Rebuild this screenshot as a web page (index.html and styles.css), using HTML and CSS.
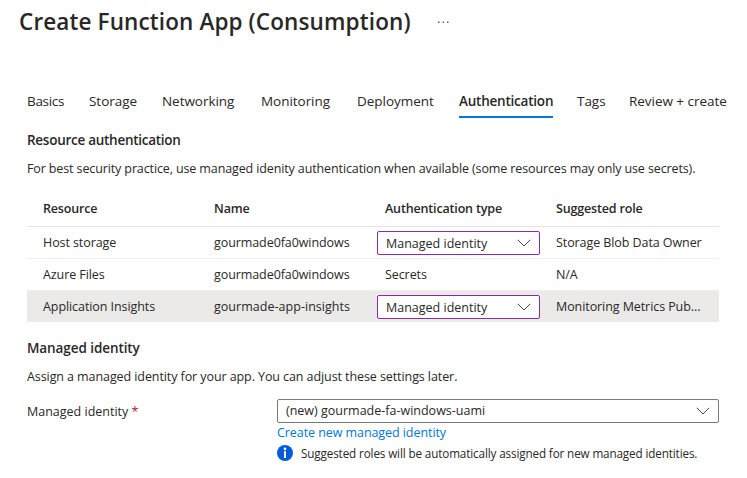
FILE: index.html
```html
<!DOCTYPE html>
<html lang="en">
<head>
<meta charset="utf-8">
<title>Create Function App (Consumption)</title>
<link rel="stylesheet" href="styles.css">
</head>
<body>
<header class="page-header">
  <h1>Create Function App (Consumption)</h1>
  <svg class="more" width="13" height="3" viewBox="0 0 13 3"><path d="M1 .5h1.500v1.500H1zM5.500 .5H7v1.500H5.500zM10 .5h1.500v1.500H10z" fill="#656368"/></svg>
</header>
<nav class="tabs">
  <a>Basics</a><a>Storage</a><a>Networking</a><a>Monitoring</a><a>Deployment</a><a class="active">Authentication</a><a>Tags</a><a>Review + create</a>
</nav>
<main>
  <section class="resources">
    <h2>Resource authentication</h2>
    <p class="intro">For best security practice, use managed idenity authentication when available (some resources may only use secrets).</p>
    <div class="table">
      <div class="row head"><span>Resource</span><span>Name</span><span>Authentication type</span><span>Suggested role</span></div>
      <div class="row"><span>Host storage</span><span>gourmade0fa0windows</span>
        <div class="select"><span>Managed identity</span><svg class="chevron" width="14" height="8" viewBox="0 0 14 8"><path d="M.8 .8 7 7l6.200-6.200"/></svg></div>
        <span>Storage Blob Data Owner</span></div>
      <div class="row"><span>Azure Files</span><span>gourmade0fa0windows</span><span>Secrets</span><span>N/A</span></div>
      <div class="row selected"><span>Application Insights</span><span class="insights">gourmade-app-insights</span>
        <div class="select"><span>Managed identity</span><svg class="chevron" width="14" height="8" viewBox="0 0 14 8"><path d="M.8 .8 7 7l6.200-6.200"/></svg></div>
        <span>Monitoring Metrics Pub...</span></div>
    </div>
  </section>
  <section class="identity">
    <h2 class="identity-title">Managed identity</h2>
    <p class="assign">Assign a managed identity for your app. You can adjust these settings later.</p>
    <div class="field">
      <label>Managed identity <span class="required">*</span></label>
      <div class="control">
        <div class="select"><span>(new) gourmade-fa-windows-uami</span><svg class="chevron" width="14" height="8" viewBox="0 0 14 8"><path d="M.8 .8 7 7l6.200-6.200"/></svg></div>
        <a class="link">Create new managed identity</a>
        <div class="info"><svg width="16" height="16" viewBox="0 0 16 16"><circle cx="8" cy="8" r="8" fill="#015cda"/><circle cx="8" cy="3.900" r="1.300" fill="#fff"/><path d="M7 6.300h2v6.700H7z" fill="#fff"/></svg><span>Suggested roles will be automatically assigned for new managed identities.</span></div>
      </div>
    </div>
  </section>
</main>
</body>
</html>
```
FILE: styles.css
```css
* { box-sizing: border-box; }
body {
  margin: 0;
  background: #fff;
  color: #292827;
  font: 12.5px/20px "Open Sans", "Noto Sans", sans-serif;
  white-space: nowrap;
}
h1, h2, p { margin: 0; }
.page-header {
  display: flex;
  align-items: center;
  gap: 26px;
  height: 44px;
  padding-left: 19px;
}
h1 {
  width: 392px;
  font-size: 22.5px;
  line-height: 32px;
  font-weight: 600;
  letter-spacing: .12px;
}
.tabs {
  display: grid;
  grid-template-columns: 62px 73px 99px 96px 102px 118px 52px 98px;
  height: 27px;
  margin: 47px 0 0 27px;
  font-size: 13.5px;
  letter-spacing: -.04px;
}
.tabs a { justify-self: start; }
.tabs a:first-child { letter-spacing: -.3px; }
.tabs .active {
  width: 94px;
  border-bottom: 2px solid #0078d4;
  font-weight: 600;
  letter-spacing: -.22px;
}
main { padding: 12px 28px 0 27px; }
h2 {
  font-size: 13.5px;
  line-height: 20px;
  font-weight: 600;
  letter-spacing: -.27px;
}
.identity-title { letter-spacing: -.08px; }
.intro, .assign { margin-top: 9px; }
.intro { letter-spacing: -.12px; }
.assign { letter-spacing: -.085px; }
.table {
  margin-top: 13px;
  letter-spacing: -.08px;
}
.row {
  display: grid;
  grid-template-columns: 171px 171px 171px 147px;
  align-items: center;
  height: 32px;
  padding: 0 16px;
  border-bottom: 1px solid #f0efee;
}
.row.head {
  height: 35px;
  padding-bottom: 1px;
  border-color: #e6e4e2;
  font-weight: 600;
  letter-spacing: -.16px;
}
.row.selected {
  height: 31px;
  border: 0;
  background: #ebeae9;
}
.insights { letter-spacing: .03px; }
.select {
  display: flex;
  align-items: center;
  justify-content: space-between;
  height: 24px;
  padding: 0 8px;
  border: 1px solid #7c7a78;
  border-radius: 2px;
  background: #fff;
  letter-spacing: 0;
}
.row .select {
  width: 163px;
  margin: 1px 0 0 -8px;
  border-color: #8a2da5;
}
.row .select span { padding-top: 2px; }
.chevron {
  fill: none;
  stroke: #494745;
  stroke-width: 1;
}
.identity { margin-top: 16px; }
.field {
  display: grid;
  grid-template-columns: 250px 1fr;
  margin-top: 12px;
}
label { padding-top: 3px; }
.required { color: #a4262c; }
.link {
  display: block;
  color: #0078d4;
  letter-spacing: -.07px;
}
.info {
  display: flex;
  align-items: center;
  gap: 8px;
  height: 20px;
  font-size: 11.7px;
  letter-spacing: -.13px;
}
```
